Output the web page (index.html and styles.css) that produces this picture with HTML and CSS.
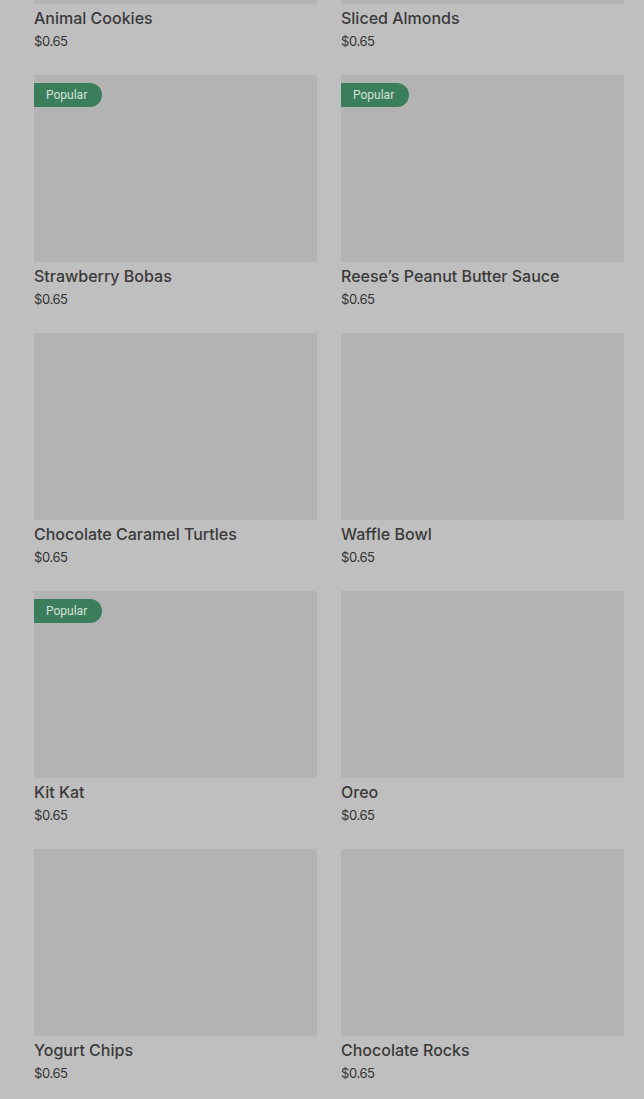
FILE: index.html
```html
<!DOCTYPE html>
<html>
<head>
<meta charset="utf-8">
<link rel="stylesheet" href="styles.css">
</head>
<body>
<div class="grid">
  <div class="card"><div class="img"></div><div class="title">Animal Cookies</div><div class="price">$0.65</div></div>
  <div class="card"><div class="img"></div><div class="title">Sliced Almonds</div><div class="price">$0.65</div></div>
  <div class="card"><div class="img"><span class="badge">Popular</span></div><div class="title">Strawberry Bobas</div><div class="price">$0.65</div></div>
  <div class="card"><div class="img"><span class="badge">Popular</span></div><div class="title">Reese’s Peanut Butter Sauce</div><div class="price">$0.65</div></div>
  <div class="card"><div class="img"></div><div class="title">Chocolate Caramel Turtles</div><div class="price">$0.65</div></div>
  <div class="card"><div class="img"></div><div class="title">Waffle Bowl</div><div class="price">$0.65</div></div>
  <div class="card"><div class="img"><span class="badge">Popular</span></div><div class="title">Kit Kat</div><div class="price">$0.65</div></div>
  <div class="card"><div class="img"></div><div class="title">Oreo</div><div class="price">$0.65</div></div>
  <div class="card"><div class="img"></div><div class="title">Yogurt Chips</div><div class="price">$0.65</div></div>
  <div class="card"><div class="img"></div><div class="title">Chocolate Rocks</div><div class="price">$0.65</div></div>
</div>
</body>
</html>
```
FILE: styles.css
```css
html, body {
  margin: 0;
  padding: 0;
  background: #bfbfbf;
  overflow: hidden;
  height: 1099px;
}
body {
  font-family: Inter, Roboto, "Liberation Sans", sans-serif;
  color: #333333;
}
.grid {
  display: grid;
  grid-template-columns: 283px 283px;
  column-gap: 24px;
  row-gap: 25px;
  padding: 0 20px 0 34px;
  margin-top: -183px;
}
.card {
  display: flex;
  flex-direction: column;
}
.img {
  position: relative;
  height: 187px;
  background: #b3b3b3;
}
.badge {
  position: absolute;
  top: 8px;
  left: 0;
  height: 24px;
  width: 68px;
  box-sizing: border-box;
  padding-left: 12px;
  line-height: 24px;
  font-family: Roboto, "Liberation Sans", sans-serif;
  font-size: 12px;
  font-weight: 400;
  color: #d6e2da;
  background: #3b7e5c;
  border-radius: 0 12px 12px 0;
}
.title {
  margin-top: 4px;
  font-size: 16px;
  line-height: 20px;
  font-weight: 500;
  color: #3a3a3a;
}
.price {
  margin-top: 4px;
  font-size: 13px;
  line-height: 18px;
  color: #333333;
  letter-spacing: -0.4px;
}
```
